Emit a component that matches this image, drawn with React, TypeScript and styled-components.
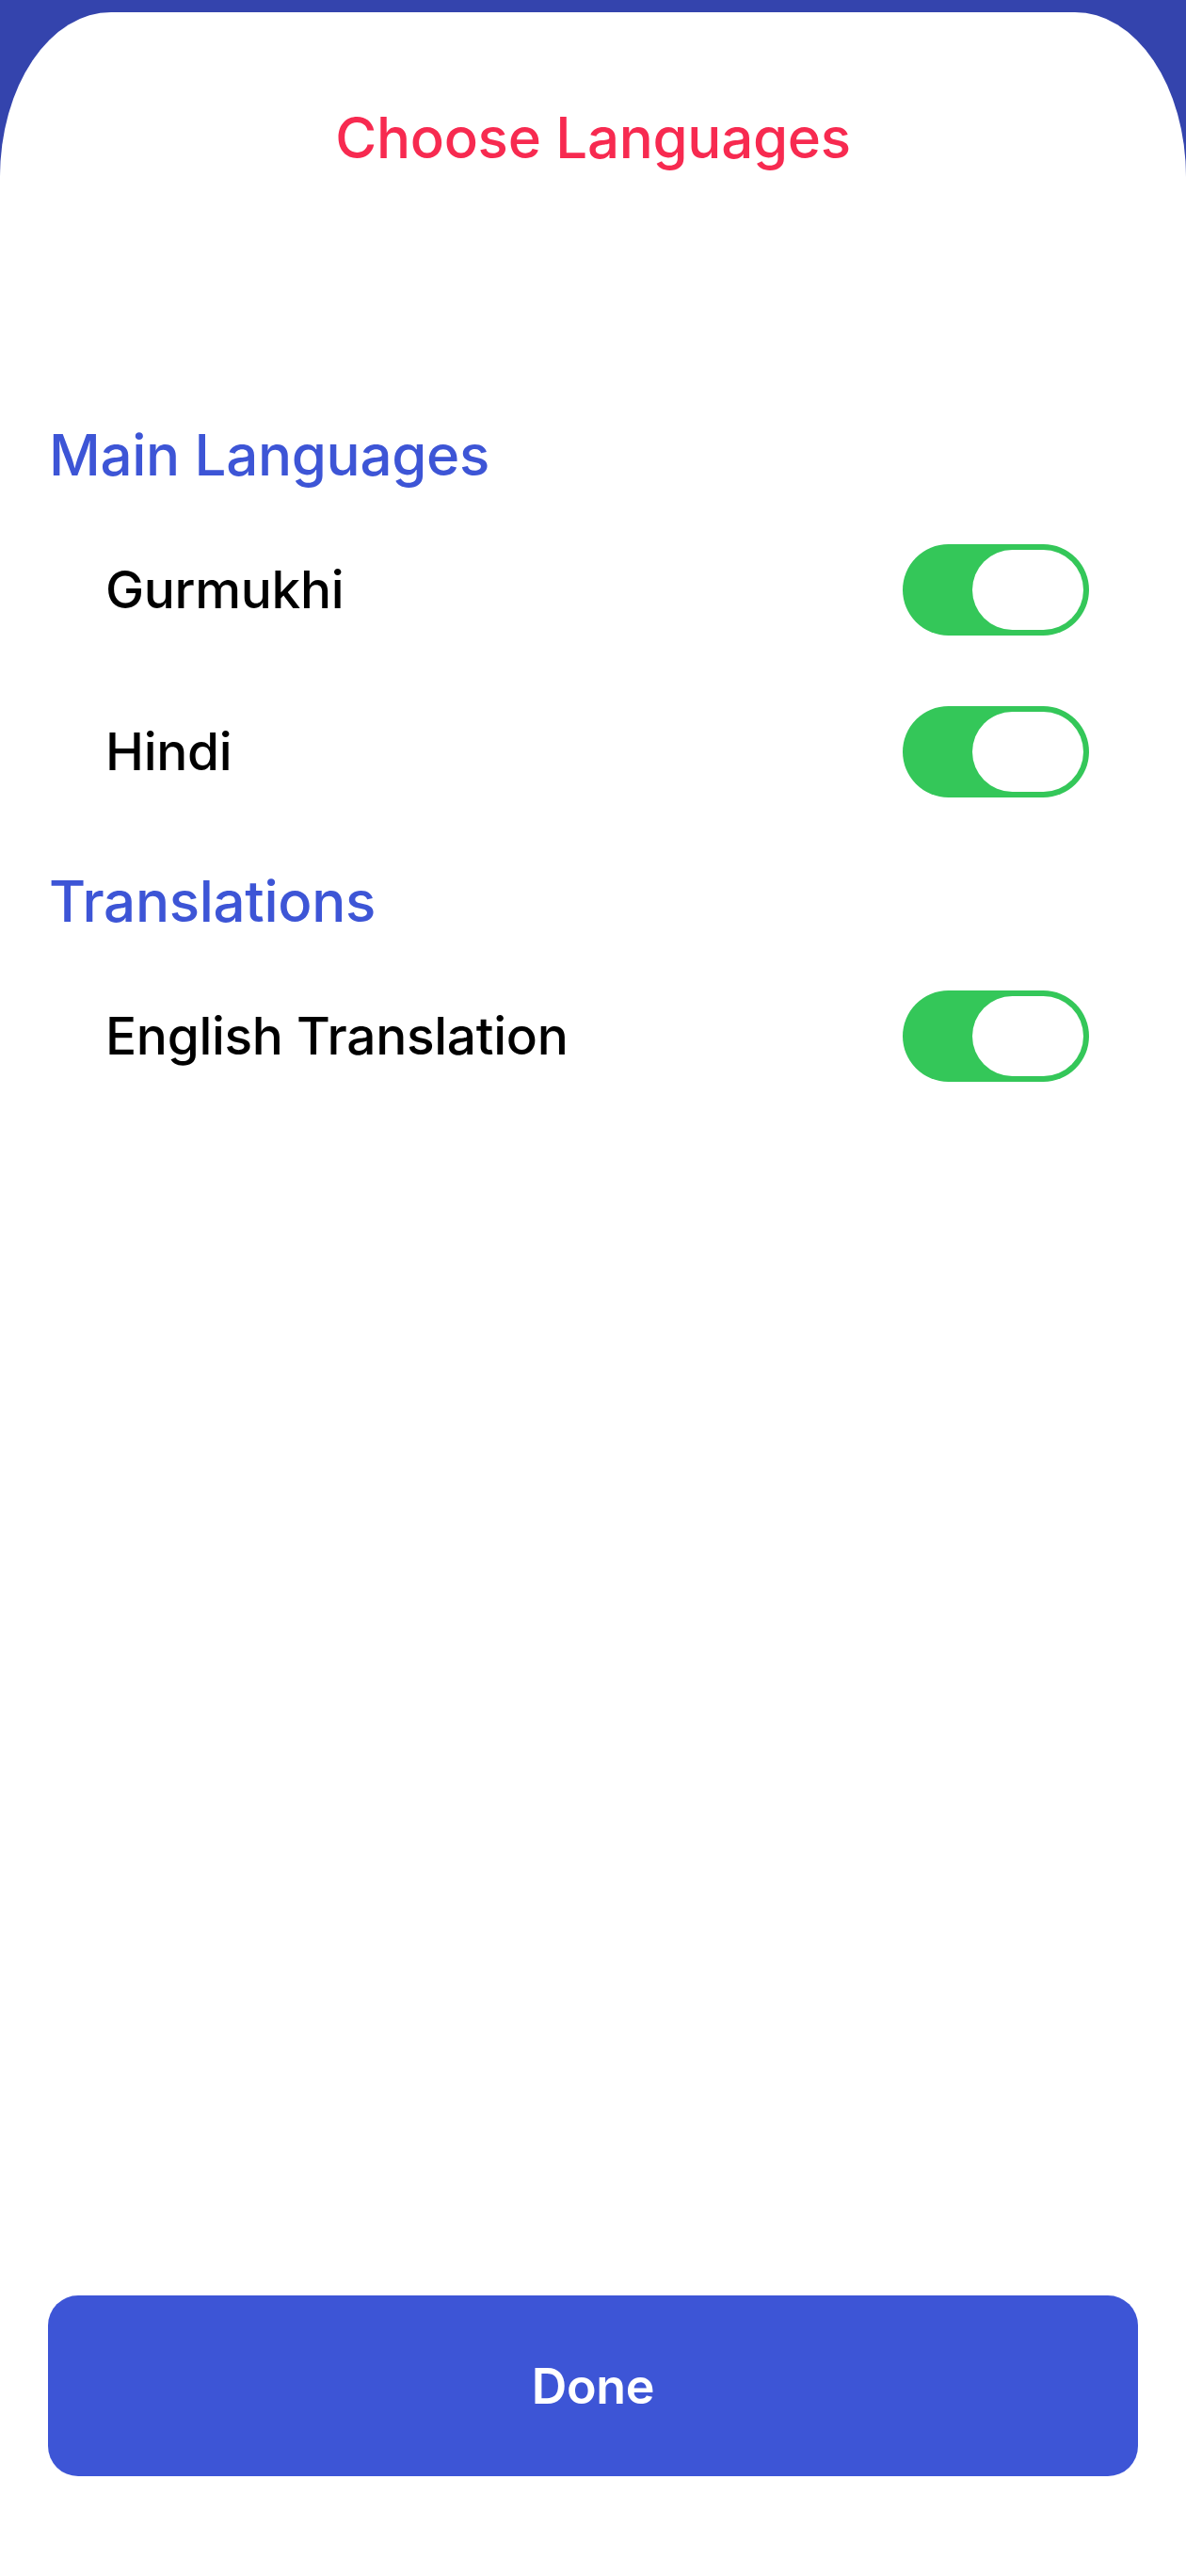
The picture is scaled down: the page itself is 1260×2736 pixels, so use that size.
import React, { useState } from "react";
import styled, { createGlobalStyle } from "styled-components";

const GlobalStyle = createGlobalStyle`
  html, body { margin: 0; padding: 0; background: #ffffff; }
  body { font-family: Inter, "Noto Sans", "Liberation Sans", sans-serif; -webkit-font-smoothing: antialiased; }
  * { box-sizing: border-box; }
`;

const Backdrop = styled.div`
  width: 1260px;
  height: 2736px;
  background: linear-gradient(to bottom, #3444ad 0px, #3444ad 170px, #ffffff 215px);
  padding-top: 13px;
  overflow: hidden;
`;

const Sheet = styled.div`
  height: 2723px;
  background: #ffffff;
  border-radius: 118px 118px 0 0 / 175px 175px 0 0;
  display: flex;
  flex-direction: column;
`;

const Header = styled.header`
  padding-top: 97px;
  display: flex;
  justify-content: center;
`;

const Title = styled.h1`
  margin: 0;
  font-size: 60px;
  line-height: 72px;
  font-weight: 500;
  color: #f72a50;
  letter-spacing: -0.3px;
`;

const Content = styled.main`
  flex: 1;
  padding: 265px 103px 0 52px;
  display: flex;
  flex-direction: column;
  gap: 58px;
`;

const Section = styled.section`
  display: flex;
  flex-direction: column;
`;

const SectionTitle = styled.h2`
  margin: 0 0 42px 0;
  font-size: 60px;
  line-height: 72px;
  font-weight: 500;
  color: #3d55d6;
  letter-spacing: -0.3px;
`;

const List = styled.div`
  display: flex;
  flex-direction: column;
  gap: 42px;
  padding-left: 60px;
`;

const Row = styled.div`
  height: 130px;
  display: flex;
  align-items: center;
  justify-content: space-between;
`;

const Label = styled.span`
  font-size: 55px;
  font-weight: 500;
  color: #000000;
  letter-spacing: -0.3px;
`;

const Track = styled.button<{ $on: boolean }>`
  width: 198px;
  height: 97px;
  border: none;
  padding: 0;
  border-radius: 49px;
  background: ${(p) => (p.$on ? "#34c759" : "#e9e9eb")};
  position: relative;
  cursor: pointer;
  flex-shrink: 0;
`;

const Knob = styled.span<{ $on: boolean }>`
  position: absolute;
  top: 6px;
  ${(p) => (p.$on ? "right: 6px;" : "left: 6px;")}
  width: 118px;
  height: 85px;
  border-radius: 43px;
  background: #ffffff;
`;

const Footer = styled.footer`
  padding: 0 51px 106px 51px;
`;

const DoneButton = styled.button`
  width: 100%;
  height: 192px;
  border: none;
  border-radius: 32px;
  background: #3d55d6;
  color: #ffffff;
  font-family: inherit;
  font-size: 52px;
  font-weight: 600;
  letter-spacing: -0.3px;
  cursor: pointer;
`;

type Item = { id: string; label: string };

const sections: { title: string; items: Item[] }[] = [
  {
    title: "Main Languages",
    items: [
      { id: "gurmukhi", label: "Gurmukhi" },
      { id: "hindi", label: "Hindi" },
    ],
  },
  {
    title: "Translations",
    items: [{ id: "english", label: "English Translation" }],
  },
];

export default function App() {
  const [on, setOn] = useState<Record<string, boolean>>({
    gurmukhi: true,
    hindi: true,
    english: true,
  });
  return (
    <>
      <GlobalStyle />
      <Backdrop>
        <Sheet>
          <Header>
            <Title>Choose Languages</Title>
          </Header>
          <Content>
            {sections.map((s) => (
              <Section key={s.title}>
                <SectionTitle>{s.title}</SectionTitle>
                <List>
                  {s.items.map((it) => (
                    <Row key={it.id}>
                      <Label>{it.label}</Label>
                      <Track
                        $on={on[it.id]}
                        aria-label={it.label}
                        onClick={() => setOn({ ...on, [it.id]: !on[it.id] })}
                      >
                        <Knob $on={on[it.id]} />
                      </Track>
                    </Row>
                  ))}
                </List>
              </Section>
            ))}
          </Content>
          <Footer>
            <DoneButton>Done</DoneButton>
          </Footer>
        </Sheet>
      </Backdrop>
    </>
  );
}
